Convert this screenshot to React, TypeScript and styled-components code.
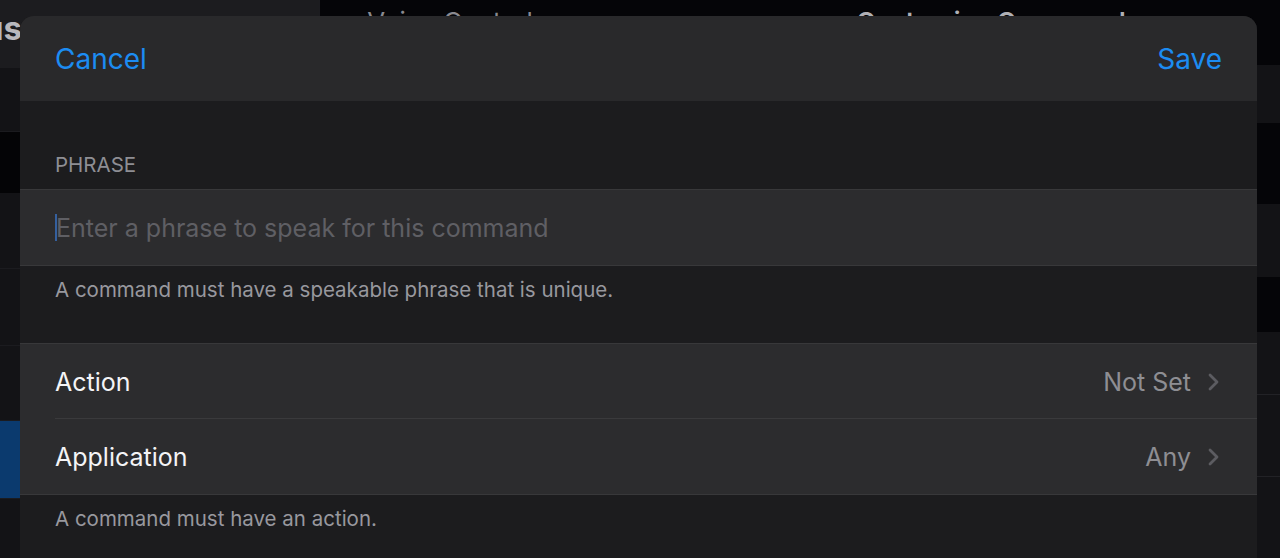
import React from "react";
import styled, { createGlobalStyle } from "styled-components";

const GlobalStyle = createGlobalStyle`
    html, body {
        margin: 0;
        padding: 0;
        background: #050508;
    }
    body {
        font-family: Inter, "Noto Sans", "Liberation Sans", sans-serif;
        -webkit-font-smoothing: antialiased;
    }
    * {
        box-sizing: border-box;
    }
`;

type CellProps = {
    label: string;
    value: string;
    divider?: boolean;
};

const Chevron = () => (
    <svg width="11" height="18" viewBox="0 0 11 18" fill="none">
        <path
            d="M2 2 L9 9 L2 16"
            stroke="#5c5c61"
            strokeWidth="2.8"
            strokeLinecap="round"
            strokeLinejoin="round"
        />
    </svg>
);

const Cell = ({ label, value, divider }: CellProps) => {
    return (
        <CellRow>
            <CellInner $divider={divider}>
                <CellLabel>{label}</CellLabel>
                <CellValue>
                    {value}
                    <Chevron />
                </CellValue>
            </CellInner>
        </CellRow>
    );
};

// sidebar rows under the header, 0 = section gap
const sideRows = [
    { h: 64, selected: false },
    { h: 0, selected: false },
    { h: 76, selected: false },
    { h: 77, selected: false },
    { h: 75, selected: false },
    { h: 78, selected: true },
    { h: 80, selected: false },
];

const App = () => {
    return (
        <>
            <GlobalStyle />
            <Screen>
                <Sidebar>
                    <SideHeader>
                        <SideTitle>Menus</SideTitle>
                    </SideHeader>
                    {sideRows.map((r, idx) =>
                        r.h === 0 ? (
                            <SideGap key={idx} />
                        ) : (
                            <SideRow key={idx} $h={r.h} $selected={r.selected} />
                        )
                    )}
                </Sidebar>
                <Detail>
                    <NavBar>
                        <BackLink>‹ Voice Control</BackLink>
                        <NavTitle>Customize Commands</NavTitle>
                    </NavBar>
                    <DetailRow $h={58} />
                    <DetailGap $h={81} />
                    <DetailRow $h={73} />
                    <DetailGap $h={55} />
                    <DetailRow $h={63} $line />
                    <DetailRow $h={82} $line />
                    <DetailRow $h={81} />
                </Detail>

                <Sheet>
                    <SheetHeader>
                        <HeaderButton>Cancel</HeaderButton>
                        <HeaderButton>Save</HeaderButton>
                    </SheetHeader>

                    <SectionLabel>Phrase</SectionLabel>
                    <InputCell>
                        <Caret />
                        <PhraseInput placeholder="Enter a phrase to speak for this command" />
                    </InputCell>
                    <FooterNote>A command must have a speakable phrase that is unique.</FooterNote>

                    <Group>
                        <Cell label="Action" value="Not Set" divider />
                        <Cell label="Application" value="Any" />
                    </Group>
                    <FooterNote>A command must have an action.</FooterNote>
                </Sheet>
            </Screen>
        </>
    );
};

export default App;

const Screen = styled.div`
    position: relative;
    display: flex;
    width: 1280px;
    height: 558px;
    overflow: hidden;
    background: #050508;
`;

const Sidebar = styled.div`
    display: flex;
    flex-direction: column;
    width: 320px;
    flex-shrink: 0;
    overflow: hidden;
    background: #131316;
    border-right: 1px solid #1c1c20;
`;

const SideHeader = styled.div`
    display: flex;
    align-items: flex-start;
    height: 68px;
    flex-shrink: 0;
    padding-top: 8px;
    overflow: hidden;
    background: #1c1c1f;
`;

const SideTitle = styled.span`
    margin-left: -88px;
    font-size: 33px;
    font-weight: 700;
    color: #b8b8bd;
    white-space: nowrap;
`;

const SideRow = styled.div<{ $h: number; $selected: boolean }>`
    height: ${(p) => p.$h}px;
    flex-shrink: 0;
    background: ${(p) => (p.$selected ? "#0b3a6e" : "#131316")};
    border-bottom: 1px solid #1b1b1f;
`;

const SideGap = styled.div`
    height: 61px;
    flex-shrink: 0;
    background: #040406;
`;

const Detail = styled.div`
    display: flex;
    flex-direction: column;
    flex: 1;
    overflow: hidden;
    background: #050508;
`;

const NavBar = styled.div`
    display: flex;
    justify-content: space-between;
    align-items: flex-start;
    height: 65px;
    flex-shrink: 0;
    padding: 6px 140px 0 30px;
    font-size: 26px;
`;

const BackLink = styled.span`
    color: #8a8a90;
`;

const NavTitle = styled.span`
    font-weight: 600;
    color: #b0b0b5;
`;

const DetailRow = styled.div<{ $h: number; $line?: boolean }>`
    height: ${(p) => p.$h}px;
    flex-shrink: 0;
    background: #131316;
    border-bottom: 1px solid ${(p) => (p.$line ? "#222226" : "#131316")};
`;

const DetailGap = styled.div<{ $h: number }>`
    height: ${(p) => p.$h}px;
    flex-shrink: 0;
    background: #050508;
`;

const Sheet = styled.div`
    position: absolute;
    top: 16px;
    left: 20px;
    width: 1237px;
    bottom: -40px;
    display: flex;
    flex-direction: column;
    background: #1c1c1e;
    border-radius: 14px 14px 0 0;
    overflow: hidden;
`;

const SheetHeader = styled.div`
    display: flex;
    justify-content: space-between;
    align-items: center;
    height: 85px;
    flex-shrink: 0;
    padding: 0 35px;
    background: #29292b;
`;

const HeaderButton = styled.button`
    padding: 0;
    border: none;
    background: none;
    font-family: inherit;
    font-size: 28px;
    color: #1c8cf2;
    cursor: pointer;
`;

const SectionLabel = styled.div`
    padding: 52px 35px 13px;
    font-size: 20.5px;
    line-height: 23px;
    color: #8e8e94;
    text-transform: uppercase;
`;

const InputCell = styled.div`
    display: flex;
    align-items: center;
    height: 77px;
    flex-shrink: 0;
    padding: 0 35px;
    background: #2c2c2e;
    border-top: 1px solid #38383a;
    border-bottom: 1px solid #38383a;
`;

const Caret = styled.span`
    width: 2px;
    height: 27px;
    margin-right: -1px;
    background: #35609e;
`;

const PhraseInput = styled.input`
    flex: 1;
    padding: 0;
    border: none;
    outline: none;
    background: transparent;
    font-family: inherit;
    font-size: 25px;
    color: #f2f2f7;

    &::placeholder {
        color: #5f5f64;
    }
`;

const FooterNote = styled.div`
    height: 77px;
    flex-shrink: 0;
    padding: 12px 35px 0;
    font-size: 20.5px;
    line-height: 23px;
    color: #98989e;
`;

const Group = styled.div`
    display: flex;
    flex-direction: column;
    flex-shrink: 0;
    border-top: 1px solid #38383a;
    border-bottom: 1px solid #38383a;
`;

const CellRow = styled.div`
    display: flex;
    height: 75px;
    padding-left: 35px;
    background: #2c2c2e;
`;

const CellInner = styled.div<{ $divider?: boolean }>`
    display: flex;
    flex: 1;
    justify-content: space-between;
    align-items: center;
    padding: 2px 38px 0 0;
    border-bottom: 1px solid ${(p) => (p.$divider ? "#3a3a3c" : "transparent")};
`;

const CellLabel = styled.span`
    font-size: 25px;
    color: #f4f4f6;
`;

const CellValue = styled.span`
    display: flex;
    align-items: center;
    gap: 17px;
    font-size: 25px;
    color: #8e8e93;
`;
